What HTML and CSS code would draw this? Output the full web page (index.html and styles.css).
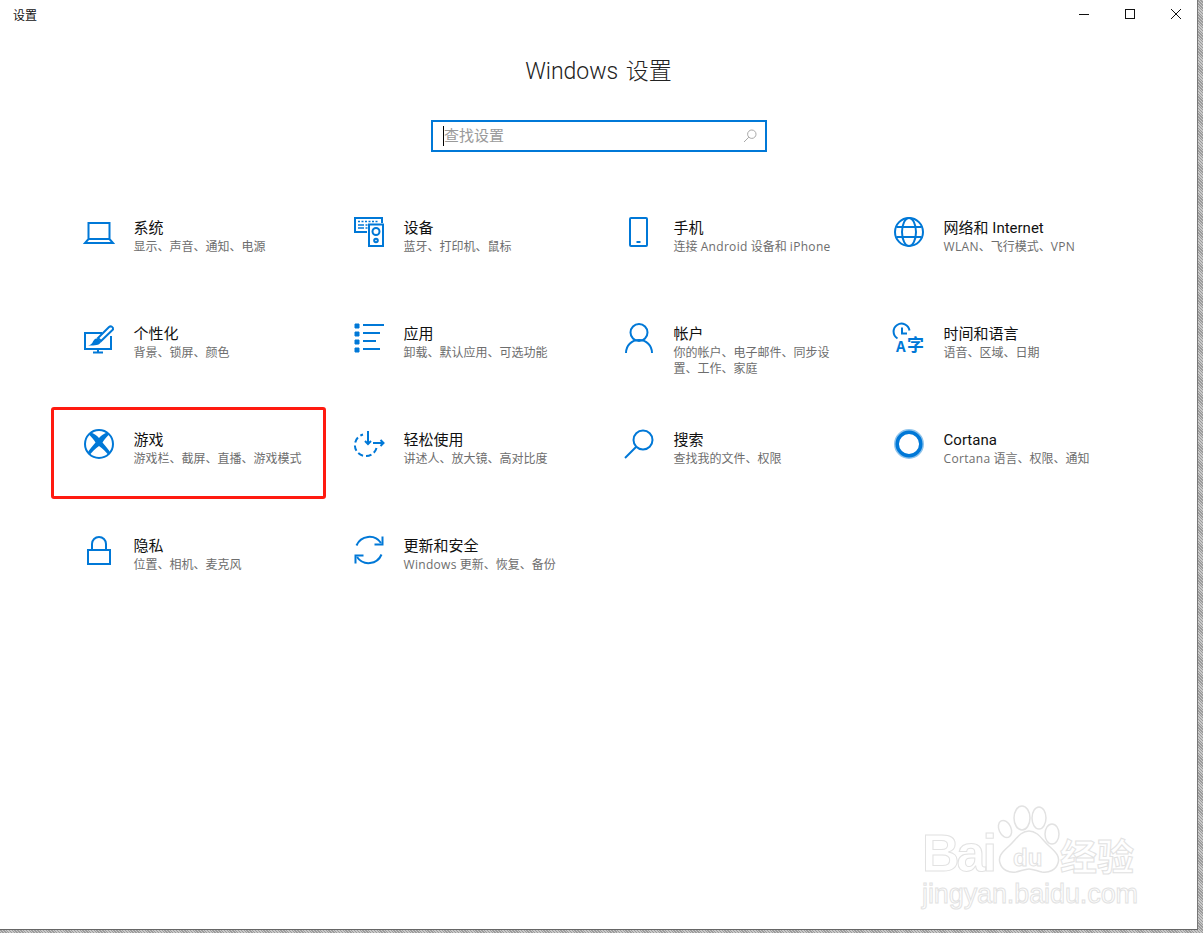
FILE: index.html
```html
<!DOCTYPE html>
<html lang="zh-CN">
<head>
<meta charset="utf-8">
<title>设置</title>
<link rel="stylesheet" href="styles.css">
</head>
<body>
<div class="window">
  <header class="titlebar">
    <span class="app-name">设置</span>
    <div class="controls">
      <svg class="ctl" viewBox="0 0 46 30"><path d="M18 14.5h10" /></svg>
      <svg class="ctl" viewBox="0 0 46 30"><rect x="18.5" y="9.5" width="9" height="9"/></svg>
      <svg class="ctl" viewBox="0 0 46 30"><path d="M18 9l10 10M28 9l-10 10"/></svg>
    </div>
  </header>
  <h1 class="heading">Windows 设置</h1>
  <div class="search">
    <span class="caret"></span>
    <span class="placeholder">查找设置</span>
    <svg class="search-icon" viewBox="0 0 14 14"><circle cx="8.8" cy="5.2" r="4.2"/><path d="M5.8 8.2L1 13"/></svg>
  </div>
  <main class="grid">
    <a class="tile">
      <svg class="icon" viewBox="0 0 30 30"><path d="M4.500 22V6h21v16M1 26h28l-3.500-4h-21z"/></svg>
      <div class="text"><div class="name">系统</div><div class="desc">显示、声音、通知、电源</div></div>
    </a>
    <a class="tile">
      <svg class="icon" viewBox="0 0 30 30"><path d="M13 15H1V1h27v5"/><path class="thin" d="M4 4.500h2M7.500 4.500h2M11 4.500h2M14.500 4.500h2M18 4.500h2M21.500 4.500h2M4 8h6M4 11h6M11.500 8h2M11.500 11h2"/><rect x="15" y="7.500" width="14" height="21.500"/><circle cx="22" cy="14.500" r="3.500"/><circle cx="22" cy="23.500" r="1.800"/></svg>
      <div class="text"><div class="name">设备</div><div class="desc">蓝牙、打印机、鼠标</div></div>
    </a>
    <a class="tile">
      <svg class="icon" viewBox="0 0 30 30"><rect x="6" y="1" width="17" height="28" rx="1"/><path d="M12.500 25h4"/></svg>
      <div class="text"><div class="name">手机</div><div class="desc">连接 <span class="en">Android</span> 设备和 <span class="en">iPhone</span></div></div>
    </a>
    <a class="tile">
      <svg class="icon" viewBox="0 0 30 30"><circle cx="15" cy="15" r="14"/><ellipse cx="15" cy="15" rx="7" ry="14"/><path d="M2.500 10h25M2.500 20h25"/></svg>
      <div class="text"><div class="name">网络和 Internet</div><div class="desc"><span class="en">WLAN</span>、飞行模式、<span class="en">VPN</span></div></div>
    </a>
    <a class="tile">
      <svg class="icon" viewBox="0 0 30 30"><path d="M18 10H1v16h26V13M14 26v3M9 29.500h10"/><path d="M29 6.500c.5-2.500-2-4-4-2.500L14 15l3 3z"/><path class="solid" d="M13.500 15.500L17 19c-1 2.500-4 3.500-10 3.500H4c3-.5 4-2 5-4 1-2 2-3.500 4.500-3z"/></svg>
      <div class="text"><div class="name">个性化</div><div class="desc">背景、锁屏、颜色</div></div>
    </a>
    <a class="tile">
      <svg class="icon" viewBox="0 0 30 30"><path class="sq" d="M1 1h4v4H1zM1 9h4v4H1zM1 17h4v4H1zM1 25h4v4H1z"/><path d="M9 2h21M9 10h17M9 18h13M9 26h17"/></svg>
      <div class="text"><div class="name">应用</div><div class="desc">卸载、默认应用、可选功能</div></div>
    </a>
    <a class="tile">
      <svg class="icon" viewBox="0 0 30 30"><circle cx="15" cy="9.500" r="8.500"/><path d="M2 30c0-7.500 5.500-13 13-13s13 5.500 13 13"/></svg>
      <div class="text"><div class="name">帐户</div><div class="desc">你的帐户、电子邮件、同步设<br>置、工作、家庭</div></div>
    </a>
    <a class="tile">
      <svg class="icon" viewBox="0 0 30 30"><path d="M3.500 15.500A8 8 0 1 1 15.500 7.500M8 4.500v6h5"/><text class="glyph glyph-a" x="2" y="29">A</text><text class="glyph glyph-z" x="13" y="27.500">字</text></svg>
      <div class="text"><div class="name">时间和语言</div><div class="desc">语音、区域、日期</div></div>
    </a>
    <a class="tile tile-marked">
      <svg class="icon" viewBox="0 0 30 30"><circle cx="15" cy="15" r="14"/><path class="solid" d="M7 3.500C10 4.500 13 6.500 15 9 17 6.500 20 4.500 23 3.500L25 5.500C22.500 8 20 11 18.500 13.500 21.500 17 25 21 26.500 24L24.500 26C22 23 18.500 19.500 15 17 11.500 19.500 8 23 5.500 26L3.500 24C5 21 8.500 17 11.500 13.500 10 11 7.500 8 5 5.500Z"/></svg>
      <div class="text"><div class="name">游戏</div><div class="desc">游戏栏、截屏、直播、游戏模式</div></div>
    </a>
    <a class="tile">
      <svg class="icon" viewBox="0 0 30 30"><path class="dash" d="M22.500 19A11 11 0 1 1 9 5.500"/><path d="M14 2v13M11 12l3 3 3-3M19 14h10.500M26.500 11l3 3-3 3"/></svg>
      <div class="text"><div class="name">轻松使用</div><div class="desc">讲述人、放大镜、高对比度</div></div>
    </a>
    <a class="tile">
      <svg class="icon" viewBox="0 0 30 30"><circle cx="19" cy="11" r="9.500"/><path d="M12 18L1 29"/></svg>
      <div class="text"><div class="name">搜索</div><div class="desc">查找我的文件、权限</div></div>
    </a>
    <a class="tile">
      <svg class="icon" viewBox="0 0 30 30"><circle class="halo" cx="15" cy="15" r="13.500"/><circle class="ring" cx="15" cy="15" r="11.800"/></svg>
      <div class="text"><div class="name">Cortana</div><div class="desc"><span class="en">Cortana</span> 语言、权限、通知</div></div>
    </a>
    <a class="tile">
      <svg class="icon" viewBox="0 0 30 30"><rect x="4" y="15" width="22" height="14"/><path d="M8 15V9a7 7 0 0 1 14 0v6"/></svg>
      <div class="text"><div class="name">隐私</div><div class="desc">位置、相机、麦克风</div></div>
    </a>
    <a class="tile">
      <svg class="icon" viewBox="0 0 30 30"><path d="M2.500 10.500A14 14 0 0 1 27 8M27.500 19.500A14 14 0 0 1 3 22"/><path d="M28.500 1.500v8h-8M1.500 28.500v-8h8"/></svg>
      <div class="text"><div class="name">更新和安全</div><div class="desc"><span class="en">Windows</span> 更新、恢复、备份</div></div>
    </a>
  </main>
  <div class="watermark">
    <span class="wm-bai">Bai</span>
    <svg class="paw" viewBox="0 0 64 68"><ellipse cx="8" cy="24" rx="6" ry="9" transform="rotate(-25 8 24)"/><ellipse cx="25" cy="13" rx="8" ry="12"/><ellipse cx="42" cy="13" rx="7" ry="11"/><ellipse cx="55" cy="29" rx="7" ry="10"/><path d="M32 26c9 0 13 9 20 15 8 7 11 11 9 17-2 7-9 10-16 9-5-1-9-3-13-3s-8 2-13 3c-7 1-14-2-16-9-2-6 1-10 9-17 7-6 11-15 20-15z"/></svg>
    <span class="wm-du">du</span>
    <span class="wm-cn">经验</span>
    <span class="wm-url">jingyan.baidu.com</span>
  </div>
</div>
</body>
</html>
```

FILE: styles.css
```css
*, *::after { box-sizing: border-box; }
html, body { margin: 0; height: 100%; }
body {
  background-color: #b0b0b0;
  background-image: repeating-linear-gradient(45deg, #9c9c9c 0 1px, #c8c8c8 1px 2px);
  font-family: "Open Sans", "Noto Sans CJK SC", sans-serif;
  overflow: hidden;
}
.window {
  position: relative;
  width: 1198px;
  height: 930px;
  background: #fff;
  border-right: 1px solid #777;
  border-bottom: 1px solid #666;
}
.titlebar {
  display: flex;
  justify-content: space-between;
  height: 30px;
}
.app-name {
  font: 12px/30px "Noto Sans CJK SC", sans-serif;
  color: #111;
  padding-left: 13px;
}
.controls { display: flex; margin-right: -2px; }
.ctl { width: 46px; height: 30px; fill: none; stroke: #111; stroke-width: 1; }
.heading {
  margin: 22px 0 0;
  height: 39px;
  text-align: center;
  font: 300 23px/40px "Roboto", "Noto Sans CJK SC", sans-serif;
  word-spacing: 2px;
  color: #222;
}
.search {
  display: flex;
  align-items: center;
  width: 336px;
  height: 32px;
  margin: 29px 0 0 431px;
  padding: 0 8px 0 10px;
  border: 2px solid #0078d7;
}
.caret { width: 1px; height: 20px; background: #000; }
.placeholder {
  flex: 1;
  margin-top: -2px;
  font: 15px/20px "Noto Sans CJK SC", sans-serif;
  color: #9a9a9a;
}
.search-icon { width: 14px; height: 14px; fill: none; stroke: #a8a8a8; stroke-width: 1; }
.grid {
  display: grid;
  grid-template-columns: repeat(4, 270px);
  grid-auto-rows: 106px;
  margin-top: 65px;
  padding-left: 84px;
}
.tile { position: relative; display: flex; gap: 19.600px; }
.tile-marked::after {
  content: "";
  position: absolute;
  left: -33px;
  top: -22px;
  width: 275px;
  height: 92px;
  border: 3px solid #ff1a10;
  border-radius: 3px;
}
.icon {
  flex: none;
  width: 30px;
  height: 30px;
  overflow: visible;
  fill: none;
  stroke: #0078d7;
  stroke-width: 2;
}
.icon .thin { stroke-width: 1.500; }
.icon .solid, .icon .sq { fill: #0078d7; }
.icon .solid { stroke: none; }
.icon .sq { stroke-width: 1; }
.icon .dash { stroke-dasharray: 5.500 3; }
.icon .halo { stroke: #8fc4ec; stroke-width: 3; }
.icon .ring { stroke-width: 3.500; }
.glyph { fill: #0078d7; stroke: none; font-family: "Noto Sans CJK SC", sans-serif; font-weight: 700; }
.glyph-a { font-size: 15px; }
.glyph-z { font-size: 17px; }
.name {
  font-family: "Roboto", "Noto Sans CJK SC", sans-serif;
  font-size: 15px;
  line-height: 22px;
  color: #111;
}
.desc {
  font-size: 12px;
  line-height: 16px;
  color: #6d6d6d;
}
.en { letter-spacing: 0.300px; }
.watermark {
  position: absolute;
  left: 920px;
  top: 800px;
  width: 225px;
  height: 115px;
  color: #fff;
  -webkit-text-stroke: 1px #e2e2e2;
}
.paw {
  position: absolute;
  left: 77px;
  top: 5px;
  width: 64px;
  height: 68px;
  fill: #fff;
  stroke: #e2e2e2;
  stroke-width: 1.500;
}
.wm-bai {
  position: absolute;
  left: 2px;
  top: 23px;
  font: 700 52px/60px "Liberation Sans", sans-serif;
  letter-spacing: -3px;
}
.wm-du {
  position: absolute;
  left: 93px;
  top: 43px;
  font: 700 24px/30px "Liberation Sans", sans-serif;
}
.wm-cn {
  position: absolute;
  left: 140px;
  top: 30px;
  font: 700 37px/50px "Noto Sans CJK SC", sans-serif;
}
.wm-url {
  position: absolute;
  left: 2px;
  top: 77px;
  font: 400 27px/34px "Liberation Sans", sans-serif;
  letter-spacing: -0.100px;
}
```
